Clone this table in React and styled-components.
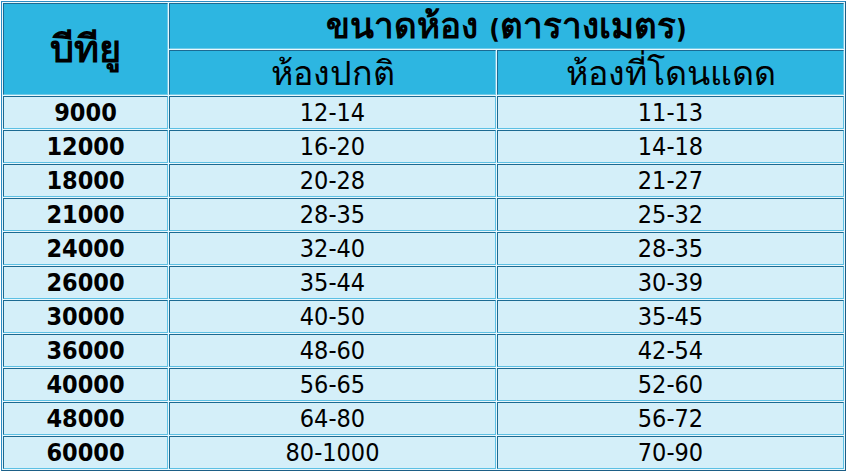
import React from 'react'
import styled, { createGlobalStyle } from 'styled-components';

const GlobalStyle = createGlobalStyle`
  body {
    margin: 0;
    background: #ffffff;
  }
`;

const Table = styled.table`
  margin: 1px 0 0 1px;
  width: 845px;
  border: 1px solid #2b8cc4;
  border-right-color: #1d5f86;
  border-bottom-color: #1d5f86;
  border-spacing: 1px;
  background: #eaf7fc;
  font-family: Tahoma, "DejaVu Sans Condensed", "DejaVu Sans", sans-serif;
  color: #000;
  table-layout: fixed;
`;

const HeadCell = styled.th`
  background: #2db6e1;
  border: 1px solid #1b6a92;
  border-right-color: #6fcbe9;
  border-bottom-color: #6fcbe9;
  padding: 0;
  text-align: center;
  vertical-align: middle;
  font-size: ${p => p.$size}px;
  font-weight: ${p => (p.$bold ? 700 : 400)};
  line-height: 1;
  height: ${p => p.$h}px;
  box-sizing: border-box;
`;

const Paren = styled.span`
  font-size: 26px;
`;

const Cell = styled.td`
  background: #d4eff9;
  border: 1px solid #1b6a92;
  border-right-color: #5cc0e4;
  border-bottom-color: #5cc0e4;
  padding: 0;
  height: 33px;
  box-sizing: border-box;
  text-align: center;
  vertical-align: middle;
  font-size: 25px;
  line-height: 1;
  font-weight: ${p => (p.$bold ? 700 : 400)};
`;

const rows = [
  ['9000', '12-14', '11-13'],
  ['12000', '16-20', '14-18'],
  ['18000', '20-28', '21-27'],
  ['21000', '28-35', '25-32'],
  ['24000', '32-40', '28-35'],
  ['26000', '35-44', '30-39'],
  ['30000', '40-50', '35-45'],
  ['36000', '48-60', '42-54'],
  ['40000', '56-65', '52-60'],
  ['48000', '64-80', '56-72'],
  ['60000', '80-1000', '70-90'],
];

const App = () => {
  return (
    <>
      <GlobalStyle />
      <Table>
        <colgroup>
          <col style={{ width: '165px' }} />
          <col style={{ width: '327px' }} />
          <col />
        </colgroup>
        <thead>
          <tr>
            <HeadCell rowSpan={2} $bold $size={38}>บีทียู</HeadCell>
            <HeadCell colSpan={2} $bold $size={35} $h={46}>
              ขนาดห้อง <Paren>(</Paren>ตารางเมตร<Paren>)</Paren>
            </HeadCell>
          </tr>
          <tr>
            <HeadCell $size={34} $h={45}>ห้องปกติ</HeadCell>
            <HeadCell $size={34} $h={45}>ห้องที่โดนแดด</HeadCell>
          </tr>
        </thead>
        <tbody>
          {rows.map(r => (
            <tr key={r[0]}>
              <Cell $bold>{r[0]}</Cell>
              <Cell>{r[1]}</Cell>
              <Cell>{r[2]}</Cell>
            </tr>
          ))}
        </tbody>
      </Table>
    </>
  )
}

export default App
